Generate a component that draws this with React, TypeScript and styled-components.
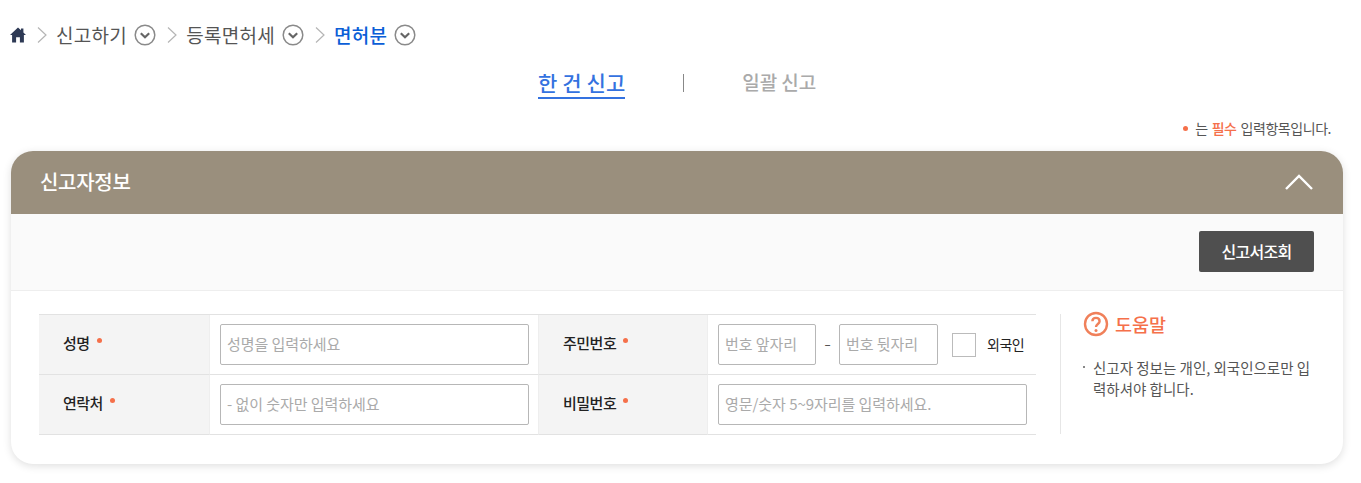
import React from "react";
import styled, { createGlobalStyle } from "styled-components";

const FONT = `"Noto Sans CJK KR", "Noto Sans", sans-serif`;

const GlobalStyle = createGlobalStyle`
  html, body {
    margin: 0;
    padding: 0;
    background: #ffffff;
    font-family: ${FONT};
  }
  * {
    box-sizing: border-box;
  }
`;

function Chevron() {
  return (
    <svg width="12" height="18" viewBox="0 0 12 18" fill="none">
      <path d="M2 1.5 L10 9 L2 16.5" stroke="#b5b5b5" strokeWidth="1.2" />
    </svg>
  );
}

function RoundArrow() {
  return (
    <ArrowIcon width="22" height="22" viewBox="0 0 22 22" fill="none">
      <circle cx="11" cy="11" r="9.8" stroke="#8a8a8a" strokeWidth="1.5" />
      <path d="M6.8 9.2 L11 13.2 L15.2 9.2" stroke="#666666" strokeWidth="2.2" />
    </ArrowIcon>
  );
}

function App() {
  return (
    <Page>
      <GlobalStyle />
      <Breadcrumb>
        <HomeIcon width="16" height="16" viewBox="0 0 16 16">
          <path d="M8 0.5 L11 3.2 L11 1.5 L13.4 1.5 L13.4 5.4 L16 8 L13.9 8 L13.9 15.5 L9.9 15.5 L9.9 10.2 L6.1 10.2 L6.1 15.5 L2.1 15.5 L2.1 8 L0 8 Z" fill="#2e3a55" />
        </HomeIcon>
        <Chevron />
        <Crumb>신고하기</Crumb>
        <RoundArrow />
        <Chevron />
        <Crumb>등록면허세</Crumb>
        <RoundArrow />
        <Chevron />
        <Crumb $current>면허분</Crumb>
        <RoundArrow />
      </Breadcrumb>

      <Tabs>
        <Tab $active>한 건 신고</Tab>
        <TabDivider />
        <Tab>일괄 신고</Tab>
      </Tabs>

      <RequiredNote>
        <Dot $note />는 <strong>필수</strong> 입력항목입니다.
      </RequiredNote>

      <Card>
        <CardHeader>
          <CardTitle>신고자정보</CardTitle>
          <svg width="30" height="18" viewBox="0 0 30 18" fill="none">
            <path d="M2 16 L15 3 L28 16" stroke="#ffffff" strokeWidth="2.4" />
          </svg>
        </CardHeader>

        <Toolbar>
          <DarkButton>신고서조회</DarkButton>
        </Toolbar>

        <CardBody>
          <FormTable>
            <Label>
              성명 <Dot />
            </Label>
            <Field>
              <TextInput placeholder="성명을 입력하세요" />
            </Field>
            <Label>
              주민번호 <Dot />
            </Label>
            <Field>
              <ShortInput $width={98} placeholder="번호 앞자리" />
              <Dash>-</Dash>
              <ShortInput $width={99} placeholder="번호 뒷자리" />
              <CheckBox />
              <CheckLabel>외국인</CheckLabel>
            </Field>
            <Label>
              연락처 <Dot />
            </Label>
            <Field>
              <TextInput placeholder="- 없이 숫자만 입력하세요" />
            </Field>
            <Label>
              비밀번호 <Dot />
            </Label>
            <Field>
              <TextInput placeholder="영문/숫자 5~9자리를 입력하세요." />
            </Field>
          </FormTable>

          <Help>
            <HelpTitle>
              <svg width="26" height="26" viewBox="0 0 26 26" fill="none">
                <circle cx="13" cy="13" r="11" stroke="#f0805a" strokeWidth="2.4" />
                <path d="M9.4 10.2 C9.4 5.8 16.6 5.8 16.6 10.2 C16.6 13 13 13 13 16" stroke="#f0805a" strokeWidth="2.4" />
                <circle cx="13" cy="19.4" r="1.5" fill="#f0805a" />
              </svg>
              도움말
            </HelpTitle>
            <HelpText>신고자 정보는 개인, 외국인으로만 입력하셔야 합니다.</HelpText>
          </Help>
        </CardBody>
      </Card>
    </Page>
  );
}

const Page = styled.div`
  width: 1361px;
  height: 483px;
  overflow: hidden;
  padding: 21px 18px 0 11px;
`;

const Breadcrumb = styled.nav`
  display: flex;
  align-items: center;
  height: 28px;
  margin-left: -1px;

  > svg {
    flex-shrink: 0;
  }
`;

const HomeIcon = styled.svg`
  margin-right: 10px;
`;

const ArrowIcon = styled.svg`
  margin-right: 10px;
`;

const Crumb = styled.span<{ $current?: boolean }>`
  margin: 0 7px 0 8px;
  font-size: 19px;
  line-height: 28px;
  letter-spacing: 0.3px;
  font-weight: ${(p) => (p.$current ? 500 : 400)};
  color: ${(p) => (p.$current ? "#0b5ed7" : "#555555")};
`;

const Tabs = styled.div`
  display: flex;
  justify-content: center;
  align-items: center;
  gap: 58px;
  height: 36px;
  margin-top: 15px;
`;

const Tab = styled.div<{ $active?: boolean }>`
  height: 34px;
  font-size: ${(p) => (p.$active ? "21px" : "19px")};
  line-height: 34px;
  font-weight: 500;
  letter-spacing: ${(p) => (p.$active ? "0.1px" : "-0.1px")};
  color: ${(p) => (p.$active ? "#3472e0" : "#aaaaaa")};
  border-bottom: 2px solid ${(p) => (p.$active ? "#3472e0" : "transparent")};
`;

const TabDivider = styled.span`
  width: 1px;
  height: 18px;
  margin-top: 2px;
  background: #888888;
`;

const RequiredNote = styled.div`
  display: flex;
  justify-content: flex-end;
  align-items: center;
  height: 20px;
  margin-top: 18px;
  padding-right: 12px;
  font-size: 14px;
  letter-spacing: -0.45px;
  color: #555555;

  strong {
    margin: 0 4px;
    font-weight: 500;
    color: #f5704a;
  }
`;

const Dot = styled.i<{ $note?: boolean }>`
  display: inline-block;
  flex-shrink: 0;
  width: 5px;
  height: 5px;
  margin: ${(p) => (p.$note ? "0 7px 0 0" : "0 0 3px 4px")};
  border-radius: 50%;
  background: #f5704a;
`;

const Card = styled.section`
  width: 1332px;
  height: 313px;
  margin-top: 13px;
  border-radius: 22px;
  background: #ffffff;
  box-shadow: 0 2px 8px rgba(0, 0, 0, 0.13);
  overflow: hidden;
`;

const CardHeader = styled.header`
  display: flex;
  justify-content: space-between;
  align-items: center;
  height: 63px;
  padding: 0 29px 2px;
  background: #9a8f7d;
`;

const CardTitle = styled.h2`
  margin: 0 0 1px;
  font-size: 20px;
  font-weight: 500;
  color: #ffffff;
  letter-spacing: -0.3px;
`;

const Toolbar = styled.div`
  display: flex;
  justify-content: flex-end;
  align-items: center;
  height: 77px;
  padding: 0 29px 2px 0;
  background: #fafafa;
  border-bottom: 1px solid #eeeeee;
`;

const DarkButton = styled.button`
  width: 115px;
  height: 41px;
  border: none;
  border-radius: 2px;
  background: #4f4f4f;
  color: #ffffff;
  font-family: ${FONT};
  font-size: 16px;
  font-weight: 500;
  letter-spacing: -0.7px;
`;

const CardBody = styled.div`
  display: flex;
  padding: 23px 0 0 28px;
`;

const FormTable = styled.div`
  display: grid;
  grid-template-columns: 171px 329px 169px 328px;
  grid-auto-rows: 60px;
  width: 997px;
  height: 121px;
  border-top: 1px solid #e2e2e2;
`;

const Label = styled.div`
  display: flex;
  align-items: center;
  gap: 3px;
  padding: 0 0 5px 24px;
  background: #f4f4f4;
  border-bottom: 1px solid #e2e2e2;
  border-right: 1px solid #eeeeee;
  font-size: 15px;
  font-weight: 500;
  letter-spacing: -0.5px;
  color: #222222;
`;

const Field = styled.div`
  display: flex;
  align-items: center;
  padding: 0 9px 0 10px;
  border-bottom: 1px solid #e2e2e2;
  border-right: 1px solid #eeeeee;

  &:nth-child(4n) {
    border-right: none;
  }
`;

const TextInput = styled.input`
  width: 100%;
  height: 41px;
  padding: 0 6px 2px;
  border: 1px solid #b7b7b7;
  border-radius: 2px;
  outline: none;
  background: #ffffff;
  font-family: ${FONT};
  font-size: 15px;
  letter-spacing: -0.05px;

  &::placeholder {
    color: #aaaaaa;
    opacity: 1;
  }
`;

const ShortInput = styled(TextInput)<{ $width: number }>`
  width: ${(p) => p.$width}px;
  flex-shrink: 0;
`;

const Dash = styled.span`
  width: 23px;
  padding-bottom: 3px;
  text-align: center;
  font-size: 20px;
  font-weight: 300;
  line-height: 20px;
  color: #555555;
`;

const CheckBox = styled.span`
  flex-shrink: 0;
  width: 24px;
  height: 24px;
  margin-left: 14px;
  border: 1px solid #bbbbbb;
`;

const CheckLabel = styled.label`
  margin: 0 0 2px 11px;
  font-size: 14px;
  letter-spacing: -0.5px;
  white-space: nowrap;
  color: #222222;
`;

const Help = styled.aside`
  width: 283px;
  height: 120px;
  margin-left: 24px;
  padding: 0 30px 0 22px;
  border-left: 1px solid #e6e6e6;
`;

const HelpTitle = styled.div`
  display: flex;
  align-items: center;
  gap: 6px;
  height: 20px;
  font-size: 18.5px;
  font-weight: 500;
  color: #f5704a;
`;

const HelpText = styled.p`
  position: relative;
  margin: 23px 0 0;
  padding-left: 10px;
  font-size: 14.5px;
  line-height: 21px;
  letter-spacing: 0;
  word-break: break-all;
  color: #555555;

  &::before {
    content: "";
    position: absolute;
    left: 0;
    top: 9px;
    width: 2px;
    height: 2px;
    background: #888888;
  }
`;

export default App;
